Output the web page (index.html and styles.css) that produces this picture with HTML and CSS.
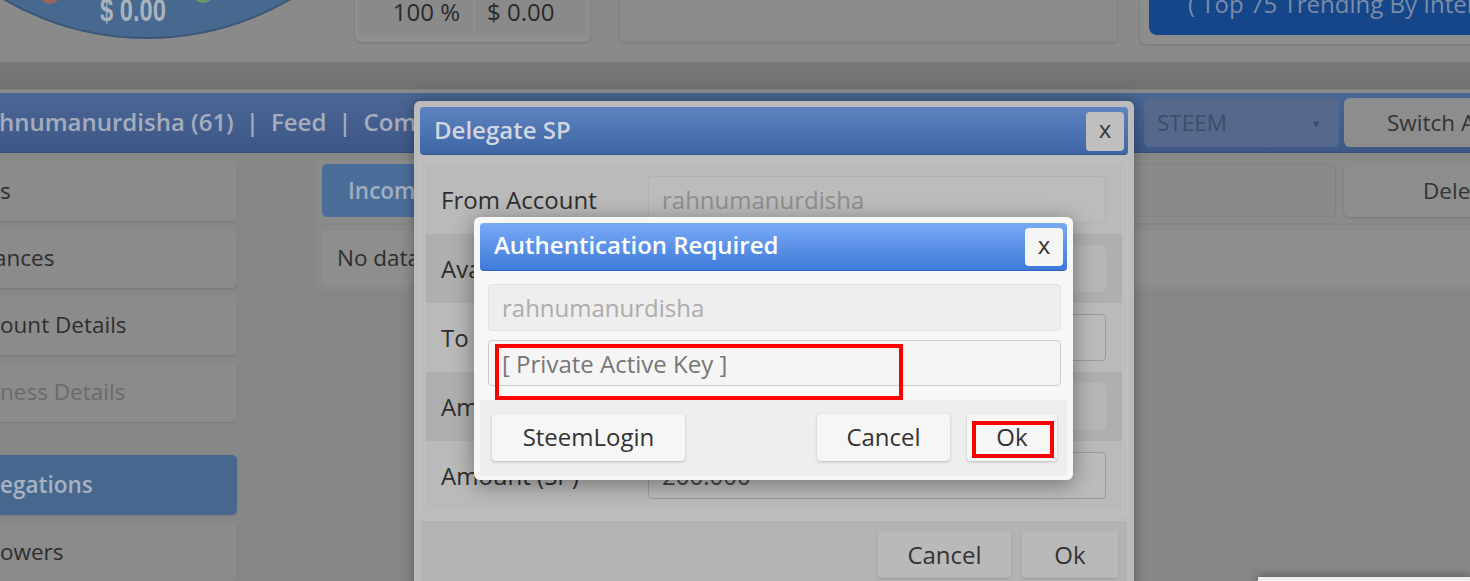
FILE: index.html
```html
<!DOCTYPE html>
<html>
<head>
<meta charset="utf-8">
<title>Delegate SP</title>
<link rel="stylesheet" href="styles.css">
</head>
<body>
<div class="page">
  <header class="top">
    <div class="logo">
      <svg width="300" height="62" viewBox="0 0 300 62">
        <circle cx="147" cy="-246" r="284" fill="#48698f" stroke="#3b5678" stroke-width="2"/>
        <circle cx="50" cy="-6" r="10" fill="#9c6660"/>
        <circle cx="203" cy="-8" r="11" fill="#6f9468"/>
      </svg>
      <span class="logo-amount">$ 0.00</span>
    </div>
    <div class="stats">
      <div class="stats-cell pct">100 %</div>
      <div class="stats-cell val">$ 0.00</div>
    </div>
    <div class="blank-card"></div>
    <div class="trend-card">
      <div class="trend-btn">( Top 75 Trending By Interest )</div>
    </div>
  </header>
  <div class="band"></div>
  <nav class="nav">
    <div class="nav-links">
      <span>ahnumanurdisha (61)</span><span class="sep">|</span><span>Feed</span><span class="sep">|</span><span>Communities</span>
    </div>
    <div class="nav-select"><span>STEEM</span><span class="caret">&#9662;</span></div>
    <div class="nav-switch">Switch Account</div>
  </nav>
  <div class="content">
    <aside class="sidebar">
      <div class="side-item">s</div>
      <div class="side-item shift">ances</div>
      <div class="side-item">ount Details</div>
      <div class="side-item disabled">ness Details</div>
      <div class="side-item active">egations</div>
      <div class="side-item">owers</div>
    </aside>
    <main class="main">
      <div class="tabs">
        <div class="tab tab-on">Incoming</div>
        <div class="tab tab-off"></div>
        <div class="tab tab-action">Delegate</div>
      </div>
      <div class="data">
        <div class="data-row">No data</div>
      </div>
    </main>
  </div>
</div>

<div class="dlg-delegate">
  <div class="dlg-head">
    <div class="dlg-title">Delegate SP</div>
    <div class="dlg-close">x</div>
  </div>
  <div class="dlg-body">
    <div class="frow">
      <div class="flabel">From Account</div>
      <div class="fval"><div class="finput ro">rahnumanurdisha</div></div>
    </div>
    <div class="frow alt">
      <div class="flabel">Available SP</div>
      <div class="fval"><div class="finput flat"></div></div>
    </div>
    <div class="frow">
      <div class="flabel">To Account</div>
      <div class="fval"><div class="finput edit"></div></div>
    </div>
    <div class="frow alt">
      <div class="flabel">Amount (VESTS)</div>
      <div class="fval"><div class="finput flat"></div></div>
    </div>
    <div class="frow">
      <div class="flabel">Amount (SP)</div>
      <div class="fval"><div class="finput edit">200.000</div></div>
    </div>
  </div>
  <div class="dlg-foot">
    <div class="dbtn cancel">Cancel</div>
    <div class="dbtn ok">Ok</div>
  </div>
</div>

<div class="dlg-auth">
  <div class="auth-head">
    <div class="auth-title">Authentication Required</div>
    <div class="auth-close">x</div>
  </div>
  <div class="auth-body">
    <div class="ainput ro">rahnumanurdisha</div>
    <div class="ainput key">[ Private Active Key ]</div>
  </div>
  <div class="auth-foot">
    <div class="abtn login">SteemLogin</div>
    <div class="abtn cancel">Cancel</div>
    <div class="abtn ok">Ok</div>
  </div>
</div>

<div class="mark mark-key"></div>
<div class="mark mark-ok"></div>
<div class="toast"></div>
</body>
</html>
```

FILE: styles.css
```css
* { box-sizing: border-box; }
html, body { margin: 0; padding: 0; }
body {
  width: 1470px;
  height: 581px;
  overflow: hidden;
  position: relative;
  background: #878787;
  font-family: "Open Sans", "Liberation Sans", sans-serif;
  color: #2e2e2e;
}

/* ---------- top strip ---------- */
.top {
  height: 62px;
  display: flex;
  align-items: flex-start;
  background: #8a8a8a;
}
.logo {
  position: relative;
  width: 300px;
  height: 62px;
  flex: none;
  overflow: hidden;
}
.logo svg { display: block; }
.logo-amount {
  position: absolute;
  left: 100px;
  top: -6px;
  font: bold 32px/32px "Liberation Sans", "DejaVu Sans", sans-serif;
  color: #aab2bc;
  white-space: nowrap;
  transform: scaleX(0.74);
  transform-origin: 0 0;
}
.stats {
  flex: none;
  margin-left: 55px;
  width: 235px;
  height: 42px;
  background: #8f8f8f;
  border-radius: 0 0 6px 6px;
  box-shadow: 0 1px 3px rgba(0,0,0,.15);
  padding: 0 3px 7px;
  display: flex;
}
.stats-cell {
  height: 35px;
  background: #8a8a8a;
  font-size: 24px;
  line-height: 24px;
  color: #2a2a2a;
}
.stats-cell.pct { width: 116px; text-align: right; padding-right: 14px; }
.stats-cell.val { flex: 1; border-left: 1px solid #939393; padding-left: 12px; }
.blank-card {
  flex: none;
  margin-left: 30px;
  width: 497px;
  height: 42px;
  background: #8b8b8b;
  border-radius: 0 0 4px 4px;
  box-shadow: 0 1px 3px rgba(0,0,0,.15);
}
.trend-card {
  flex: 1;
  margin-left: 23px;
  height: 44px;
  background: #8d8d8d;
  border-radius: 0 0 0 6px;
  padding: 0 0 9px 9px;
  box-shadow: 0 1px 3px rgba(0,0,0,.15);
}
.trend-btn {
  height: 35px;
  background: #16468a;
  border-radius: 0 0 0 8px;
  color: #7a8ba6;
  font-size: 24px;
  line-height: 8px;
  padding-left: 39px;
  white-space: nowrap;
  overflow: hidden;
}

.band {
  height: 31px;
  background: linear-gradient(#787878 0, #707070 27px, #8c8c8c 28px, #8c8c8c 31px);
}

/* ---------- nav ---------- */
.nav {
  height: 60px;
  display: flex;
  align-items: center;
  gap: 5px;
  background: linear-gradient(#4b6794, #3d5787);
  border-bottom: 1px solid #34507e;
  white-space: nowrap;
}
.nav-links {
  flex: 1 1 auto;
  min-width: 0;
  margin-left: -15px;
  overflow: hidden;
  font-size: 24px;
  font-weight: 600;
  color: #a5adbc;
  line-height: 52px;
  margin-bottom: 2px;
}
.nav-links .sep { margin: 0 12px; }
.nav-select {
  flex: none;
  width: 195px;
  height: 49px;
  background: #56698c;
  border-radius: 6px;
  display: flex;
  align-items: center;
  justify-content: space-between;
  padding: 0 19px 0 13px;
  font-size: 22.5px;
  color: #3d4d69;
}
.nav-select .caret { font-size: 13px; }
.nav-switch {
  flex: none;
  width: 200px;
  margin-right: -74px;
  height: 49px;
  background: #8d8d8d;
  border-radius: 6px;
  font-size: 22.5px;
  line-height: 49px;
  padding-left: 43px;
  color: #333;
}

/* ---------- content ---------- */
.content { display: flex; }
.sidebar {
  flex: none;
  width: 237px;
  padding-top: 8px;
  display: flex;
  flex-direction: column;
  gap: 7px;
}
.side-item {
  height: 60px;
  background: #8b8b8b;
  border-radius: 0 5px 5px 0;
  box-shadow: 0 1px 2px rgba(0,0,0,.12);
  font-size: 22.5px;
  line-height: 60px;
  white-space: nowrap;
  overflow: hidden;
  color: #2e2e2e;
}
.side-item.shift { text-indent: -6px; }
.side-item.disabled { color: #6b6b6b; }
.side-item.active {
  margin-top: 26px;
  background: #46678e;
  color: #a8b2c0;
  font-weight: 600;
}
.main {
  flex: 1;
  margin-left: 79px;
  padding-top: 7px;
  min-width: 0;
}
.tabs {
  display: flex;
  gap: 8px;
  padding: 4px 0 6px 6px;
  background: #8b8b8b;
}
.tab {
  height: 53px;
  border-radius: 5px;
  font-size: 22.5px;
  line-height: 53px;
  white-space: nowrap;
}
.tab-on {
  flex: none;
  width: 380px;
  background: #4a6d99;
  color: #a2aec0;
  font-weight: 600;
  padding-left: 26px;
}
.tab-off {
  flex: 1;
  background: #8a8a8a;
  border: 1px solid #828282;
}
.tab-action {
  flex: none;
  width: 250px;
  margin-right: -124px;
  background: #8d8d8d;
  box-shadow: 0 1px 2px rgba(0,0,0,.15);
  padding-left: 79px;
  color: #333;
}
.data {
  margin-top: 2px;
  padding: 6px 0 5px 6px;
  background: #8a8a8a;
}
.data-row {
  height: 54px;
  background: #8e8e8e;
  padding-left: 15px;
  font-size: 22.5px;
  line-height: 54px;
  color: #2e2e2e;
}

/* ---------- delegate dialog (behind auth) ---------- */
.dlg-delegate {
  position: absolute;
  left: 414px;
  top: 101px;
  width: 720px;
  height: 500px;
  background: #bcbcbc;
  border-radius: 6px;
  padding: 6px 6px 0;
  box-shadow: 0 0 14px rgba(0,0,0,.35);
  font-size: 24px;
}
.dlg-head {
  height: 48px;
  display: flex;
  justify-content: space-between;
  align-items: flex-start;
  background: linear-gradient(#5d84bf, #3f65a5);
  border-bottom: 1px solid #37599a;
  border-radius: 4px;
  padding: 0 4px 0 14px;
}
.dlg-title {
  font-weight: 600;
  color: #d0d6df;
  line-height: 46px;
}
.dlg-close {
  margin-top: 5px;
  width: 38px;
  height: 39px;
  background: #bfbfbf;
  border-radius: 4px;
  text-align: center;
  line-height: 34px;
  color: #3a3a3a;
}
.dlg-body {
  margin-top: 3px;
  background: #bdbdbd;
  border: 1px solid #c3c3c3;
  border-radius: 3px;
  padding: 6px 5px 5px 5px;
}
.frow {
  height: 69px;
  display: flex;
  align-items: center;
  background: #bababa;
}
.frow.alt { background: #afafaf; }
.flabel {
  width: 206px;
  flex: none;
  padding: 0 0 1px 15px;
  color: #2e2e2e;
  white-space: nowrap;
}
.fval { flex: 1; padding: 0 16px; }
.finput {
  height: 47px;
  border-radius: 4px;
  padding-left: 13px;
  line-height: 45px;
  white-space: nowrap;
  color: #454545;
}
.finput.ro { background: #bcbcbc; border: 1px solid #b2b2b2; color: #8e8e8e; }
.finput.flat { background: #b6b6b6; }
.finput.edit { background: #bbbbbb; border: 1px solid #9b9b9b; }
.dlg-foot {
  margin-top: 4px;
  height: 80px;
  background: #b3b3b3;
  border: 1px solid #bdbdbd;
  border-radius: 3px;
  display: flex;
  justify-content: flex-end;
  align-items: flex-start;
  gap: 11px;
  padding: 10px 9px 0 0;
}
.dbtn {
  height: 47px;
  background: #b9b9b9;
  border-radius: 4px;
  box-shadow: 0 1px 2px rgba(0,0,0,.15);
  text-align: center;
  line-height: 47px;
  color: #333;
}
.dbtn.cancel { width: 133px; }
.dbtn.ok { width: 96px; }

/* ---------- auth dialog ---------- */
.dlg-auth {
  position: absolute;
  left: 474px;
  top: 217px;
  width: 599px;
  height: 263px;
  background: #f7f7f7;
  border-radius: 6px;
  padding: 6px 6px 3px;
  box-shadow: 0 4px 22px rgba(0,0,0,.4);
  font-size: 24px;
}
.auth-head {
  height: 48px;
  display: flex;
  justify-content: space-between;
  align-items: flex-start;
  background: linear-gradient(#78aaf6, #3f7ad9);
  border-bottom: 1px solid #2f66c4;
  border-radius: 4px;
  padding: 0 4px 0 14px;
}
.auth-title {
  font-weight: 600;
  color: #ffffff;
  line-height: 43px;
}
.auth-close {
  margin-top: 5px;
  width: 38px;
  height: 38px;
  background: #f5f5f5;
  border-radius: 4px;
  text-align: center;
  line-height: 34px;
  color: #333;
}
.auth-body {
  padding: 13px 6px 0 8px;
  display: flex;
  flex-direction: column;
  gap: 9px;
}
.ainput {
  height: 47px;
  border-radius: 4px;
  padding-left: 13px;
  line-height: 45px;
  white-space: nowrap;
}
.ainput.ro { background: #eeeeee; border: 1px solid #e3e3e3; color: #acacac; }
.ainput.key { height: 46px; line-height: 46px; background: #f5f5f5; border: 1px solid #cdcdcd; color: #777; }
.auth-foot {
  margin-top: 14px;
  height: 76px;
  background: #eeeeee;
  border-radius: 0 0 4px 4px;
  display: flex;
  align-items: flex-start;
  padding: 14px 10px 0 12px;
}
.abtn {
  height: 47px;
  background: #f6f6f6;
  border-radius: 4px;
  box-shadow: 0 1px 3px rgba(0,0,0,.22);
  text-align: center;
  line-height: 45px;
  color: #333;
}
.abtn.login { width: 193px; }
.abtn.cancel { width: 133px; margin-left: auto; }
.abtn.ok { width: 90px; margin-left: 17px; }

/* ---------- annotations & toast ---------- */
.mark {
  position: absolute;
  border: 4px solid #ff0000;
}
.mark-key { left: 495px; top: 344px; width: 408px; height: 56px; }
.mark-ok { left: 972px; top: 421px; width: 82px; height: 37px; }
.toast {
  position: absolute;
  left: 1258px;
  top: 577px;
  width: 212px;
  height: 20px;
  background: #eeeeee;
  box-shadow: 0 -2px 8px rgba(0,0,0,.3);
}
```
